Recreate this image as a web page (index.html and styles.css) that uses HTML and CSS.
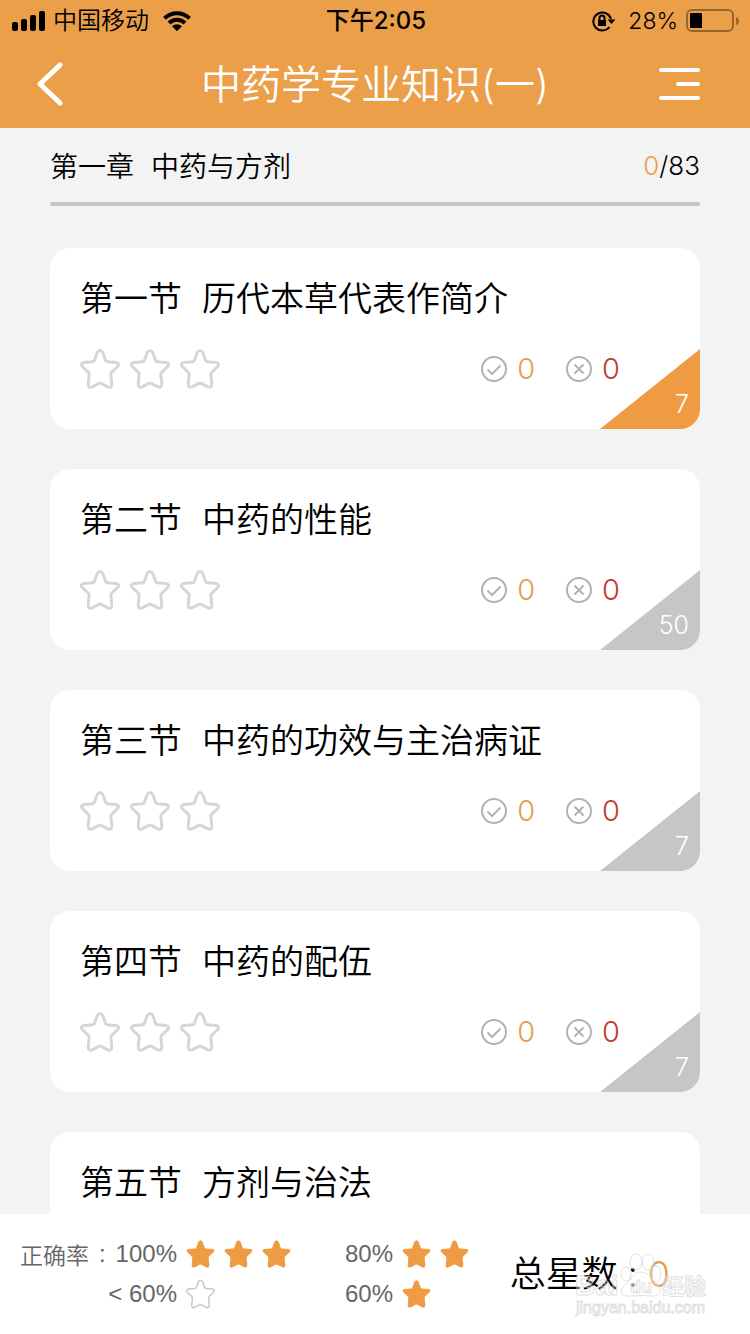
FILE: index.html
```html
<!DOCTYPE html>
<html lang="zh-CN">
<head>
    <meta charset="UTF-8">
    <meta name="viewport" content="width=device-width, initial-scale=1.0">
    <title>中药学专业知识(一)</title>
    <link rel="stylesheet" href="styles.css">
</head>
<body>
    <svg class="sprite" aria-hidden="true">
        <symbol id="star" viewBox="0 0 40 40">
            <path d="M17.2 3.6Q20 -0.6 22.8 3.6L25.6 11.4Q26 12.6 27.3 12.7L36 13.4Q40.4 14.4 37.2 18L31.6 23.4Q30.7 24.3 30.9 25.5L31.8 35Q31.6 39.6 27.4 37.6L21.2 34.4Q20 33.8 18.8 34.4L12.6 37.6Q8.4 39.6 8.200 35L9.100 25.500Q9.300 24.300 8.400 23.400L2.800 18Q-0.400 14.400 4 13.400L12.700 12.700Q14 12.600 14.400 11.400Z"/>
        </symbol>
        <symbol id="check" viewBox="0 0 26 26">
            <circle cx="13" cy="13" r="12"/>
            <path d="M6.500 13.500l4.500 4.500 8.500-8.500"/>
        </symbol>
        <symbol id="cross" viewBox="0 0 26 26">
            <circle cx="13" cy="13" r="12"/>
            <path d="M8.5 8.5l9 9M17.5 8.5l-9 9"/>
        </symbol>
    </svg>

    <header class="top">
        <div class="status-bar">
            <div class="carrier">
                <svg width="33" height="20" viewBox="0 0 33 20">
                    <rect x="0" y="11" width="6" height="9" rx="2"/>
                    <rect x="9" y="8" width="6" height="12" rx="2"/>
                    <rect x="18" y="4" width="6" height="16" rx="2"/>
                    <rect x="27" y="0" width="6" height="20" rx="2"/>
                </svg>
                <span>中国移动</span>
                <svg class="wifi" width="28" height="20" viewBox="0 0 28 20">
                    <path class="arc" d="M1.5 7.3a17.8 17.8 0 0 1 25 0M6 12a11.4 11.4 0 0 1 16 0"/>
                    <path d="M9 15.3a7.2 7.2 0 0 1 10 0l-5 4.9z"/>
                </svg>
            </div>
            <time class="clock">下午2:05</time>
            <div class="power">
                <svg class="lock" width="24" height="22" viewBox="0 0 24 22">
                    <path class="ring" d="M17.500 17A9 9 0 1 1 19 9"/>
                    <path d="M15.500 9.500h8L19.500 14zM6 10h8v6H6z"/>
                    <path class="shackle" d="M7.500 10.500V8a2.500 2.500 0 0 1 5 0v2.500"/>
                </svg>
                <span>28%</span>
                <svg class="battery" width="54" height="24" viewBox="0 0 54 24">
                    <rect class="shell" x="1" y="1" width="46" height="21" rx="5"/>
                    <path class="tip" d="M50 8q3 1 3 4t-3 4z"/>
                    <rect x="4" y="4" width="12" height="15" rx="1"/>
                </svg>
            </div>
        </div>
        <nav class="nav-bar">
            <button class="nav-btn" type="button" aria-label="返回">
                <svg width="28" height="46" viewBox="0 0 28 46"><path class="back" d="M25 4L5 23l20 19"/></svg>
            </button>
            <h1>中药学专业知识(一)</h1>
            <button class="nav-btn nav-menu" type="button" aria-label="菜单">
                <svg width="42" height="34" viewBox="0 0 42 34"><path class="menu" d="M2 3h37M19 17h20M2 31h37"/></svg>
            </button>
        </nav>
    </header>

    <main class="content">
        <section class="chapter">
            <h2><span>第一章</span><span>中药与方剂</span></h2>
            <p class="chapter-count"><span>0</span>/83</p>
        </section>
        <div class="progress"></div>

        <ul class="sections">
            <li><a class="card" href="#s1">
                <h3><span>第一节</span><span>历代本草代表作简介</span></h3>
                <div class="card-info">
                    <div class="stars"><svg><use href="#star"/></svg><svg><use href="#star"/></svg><svg><use href="#star"/></svg></div>
                    <div class="count right"><svg><use href="#check"/></svg>0</div>
                    <div class="count wrong"><svg><use href="#cross"/></svg>0</div>
                </div>
                <div class="corner active"><span>7</span></div>
            </a></li>
            <li><a class="card" href="#s2">
                <h3><span>第二节</span><span>中药的性能</span></h3>
                <div class="card-info">
                    <div class="stars"><svg><use href="#star"/></svg><svg><use href="#star"/></svg><svg><use href="#star"/></svg></div>
                    <div class="count right"><svg><use href="#check"/></svg>0</div>
                    <div class="count wrong"><svg><use href="#cross"/></svg>0</div>
                </div>
                <div class="corner"><span>50</span></div>
            </a></li>
            <li><a class="card" href="#s3">
                <h3><span>第三节</span><span>中药的功效与主治病证</span></h3>
                <div class="card-info">
                    <div class="stars"><svg><use href="#star"/></svg><svg><use href="#star"/></svg><svg><use href="#star"/></svg></div>
                    <div class="count right"><svg><use href="#check"/></svg>0</div>
                    <div class="count wrong"><svg><use href="#cross"/></svg>0</div>
                </div>
                <div class="corner"><span>7</span></div>
            </a></li>
            <li><a class="card" href="#s4">
                <h3><span>第四节</span><span>中药的配伍</span></h3>
                <div class="card-info">
                    <div class="stars"><svg><use href="#star"/></svg><svg><use href="#star"/></svg><svg><use href="#star"/></svg></div>
                    <div class="count right"><svg><use href="#check"/></svg>0</div>
                    <div class="count wrong"><svg><use href="#cross"/></svg>0</div>
                </div>
                <div class="corner"><span>7</span></div>
            </a></li>
            <li><a class="card" href="#s5">
                <h3><span>第五节</span><span>方剂与治法</span></h3>
            </a></li>
        </ul>
    </main>

    <footer class="legend">
        <div class="rates">
            <div class="rate"><span class="label">正确率</span><span class="colon">:</span><span>100%</span></div>
            <div class="marks"><svg><use href="#star"/></svg><svg><use href="#star"/></svg><svg><use href="#star"/></svg></div>
            <div class="rate">80%</div>
            <div class="marks"><svg><use href="#star"/></svg><svg><use href="#star"/></svg></div>
            <div class="rate">&lt; 60%</div>
            <div class="marks"><svg class="empty"><use href="#star"/></svg></div>
            <div class="rate">60%</div>
            <div class="marks"><svg><use href="#star"/></svg></div>
        </div>
        <p class="total"><span>总星数</span><span class="total-colon">:</span><span class="total-num">0</span></p>
        <svg class="watermark" width="136" height="68" viewBox="0 0 136 68">
            <g class="paw">
                <ellipse cx="52" cy="22" rx="5" ry="7"/>
                <ellipse cx="62" cy="10" rx="6" ry="8"/>
                <ellipse cx="74" cy="10" rx="6" ry="8"/>
                <ellipse cx="82" cy="22" rx="5" ry="8"/>
                <path d="M67 20c-8 0-9 7-15 12-8 6-5 13 4 12 7 0 15-1 21 0 9 1 12-6 6-12-6-5-8-12-16-12z"/>
            </g>
            <text class="mark-brand" x="1" y="43">Bai</text>
            <text class="mark-du" x="56" y="41">du</text>
            <text class="mark-cn" x="88" y="42">经验</text>
            <text class="mark-url" x="2" y="61">jingyan.baidu.com</text>
        </svg>
    </footer>
</body>
</html>
```
FILE: styles.css
```css
* {
    box-sizing: border-box;
}

body {
    margin: 0;
    height: 100vh;
    display: flex;
    flex-direction: column;
    overflow: hidden;
    background: #f3f3f3;
    color: #000;
    font-family: Inter, "Noto Sans CJK SC", sans-serif;
}

h1, h2, h3, p, ul {
    margin: 0;
    padding: 0;
    font-weight: 350;
}

.sprite {
    display: none;
}

/* header */
.top {
    flex: none;
    background: #eb9f49;
}

.status-bar {
    display: grid;
    grid-template-columns: 1fr auto 1fr;
    align-items: center;
    height: 40px;
    padding: 0 10px 0 12px;
    font-size: 24px;
    line-height: 42px;
}

.carrier, .power {
    display: flex;
    align-items: center;
    gap: 8px;
    font-weight: 350;
}

.power {
    justify-content: flex-end;
    font-size: 23px;
}

.wifi {
    margin-left: 6px;
}

.wifi .arc {
    fill: none;
    stroke: #000;
    stroke-width: 4;
}

.clock {
    font-weight: 500;
}

.lock {
    margin-right: 4px;
}

.lock .ring, .lock .shackle {
    fill: none;
    stroke: #000;
    stroke-width: 2;
}

.battery .shell {
    fill: none;
    stroke: #97662f;
    stroke-width: 2;
}

.battery .tip {
    fill: #97662f;
}

.nav-bar {
    display: grid;
    grid-template-columns: 42px 1fr 42px;
    align-items: center;
    height: 88px;
    padding: 0 49px 0 35px;
}

.nav-bar h1 {
    padding: 2px 0 0 14px;
    color: #fff;
    font-size: 40px;
    line-height: 60px;
    text-align: center;
}

.nav-btn {
    display: flex;
    width: 42px;
    padding: 0;
    border: none;
    background: none;
    cursor: pointer;
}

.nav-btn path {
    fill: none;
    stroke: #fff;
    stroke-width: 4;
    stroke-linecap: round;
}

.nav-btn .back {
    stroke-width: 5;
    stroke-linejoin: round;
}

/* chapter and its sections */
.content {
    flex: 1;
    min-height: 0;
    padding: 0 50px;
    overflow: hidden;
}

.chapter {
    display: flex;
    align-items: center;
    justify-content: space-between;
    height: 74px;
    font-size: 28px;
}

.chapter h2 {
    display: flex;
    gap: 17px;
    font-size: 28px;
}

.chapter-count {
    font-size: 26px;
}

.chapter-count span {
    color: #eb9f49;
}

.progress {
    height: 4px;
    border-radius: 2px;
    background: #c4c4c4;
}

.sections {
    display: flex;
    flex-direction: column;
    gap: 40px;
    margin-top: 42px;
    list-style: none;
}

.card {
    position: relative;
    display: block;
    min-height: 181px;
    padding: 26px 30px 38px;
    border-radius: 20px;
    background: #fff;
    color: #000;
    text-decoration: none;
    overflow: hidden;
}

.card h3 {
    display: flex;
    gap: 20px;
    font-size: 34px;
    line-height: 50px;
}

.card-info {
    display: flex;
    align-items: center;
    gap: 31px;
    height: 40px;
    margin-top: 25px;
    padding-right: 50px;
}

.stars {
    display: flex;
    gap: 10px;
    margin-right: auto;
}

.stars svg {
    width: 40px;
    height: 40px;
    fill: none;
    stroke: #d6d6d6;
    stroke-width: 3;
}

.count {
    display: flex;
    align-items: center;
    gap: 10px;
    font-size: 29px;
    line-height: 42px;
}

.count svg {
    width: 26px;
    height: 26px;
    fill: none;
    stroke: #b2b2b2;
    stroke-width: 2;
}

.right {
    color: #e0a04e;
}

.wrong {
    color: #c5392d;
}

.corner {
    position: absolute;
    right: 0;
    bottom: 0;
    display: flex;
    align-items: flex-end;
    justify-content: flex-end;
    width: 100px;
    height: 80px;
    padding: 0 11px 9px;
    background: #c6c6c6;
    clip-path: polygon(100% 0, 100% 100%, 0 100%);
    color: #fff;
    font-size: 25px;
    line-height: 32px;
}

.corner.active {
    background: #ef9b43;
}

/* footer */
.legend {
    position: relative;
    flex: none;
    display: flex;
    justify-content: space-between;
    height: 120px;
    padding: 20px 80px 20px 20px;
    background: #fff;
}

.rates {
    display: grid;
    grid-template-columns: 157px 153px 47px auto;
    grid-auto-rows: 40px;
    align-items: center;
    column-gap: 8px;
    color: #666;
    font-family: "Liberation Sans", "Noto Sans CJK SC", sans-serif;
    font-size: 24px;
}

.rate {
    display: flex;
    justify-content: flex-end;
    align-items: center;
    white-space: nowrap;
}

.label {
    font-size: 23px;
    font-weight: 350;
}

.colon {
    margin: 0 auto;
}

.marks {
    display: flex;
    gap: 7px;
}

.marks svg {
    width: 31px;
    height: 30px;
    fill: #ef9b43;
}

.marks .empty {
    fill: none;
    stroke: #c8c8c8;
    stroke-width: 2;
}

.total {
    display: flex;
    align-items: center;
    font-size: 36px;
    line-height: 82px;
}

.total-colon {
    width: 30px;
    text-align: center;
}

.total-num {
    color: #e0a04e;
}

.watermark {
    position: absolute;
    right: 40px;
    bottom: 14px;
    fill: rgba(255, 255, 255, 0.3);
    stroke: rgba(210, 210, 210, 0.7);
    stroke-width: 1;
    font-family: "Liberation Sans", "Noto Sans CJK SC", sans-serif;
    font-weight: 700;
}

.mark-brand {
    font-size: 28px;
}

.mark-du {
    font-size: 18px;
}

.mark-cn {
    font-size: 22px;
}

.mark-url {
    font-size: 16px;
    font-weight: 400;
}
```
